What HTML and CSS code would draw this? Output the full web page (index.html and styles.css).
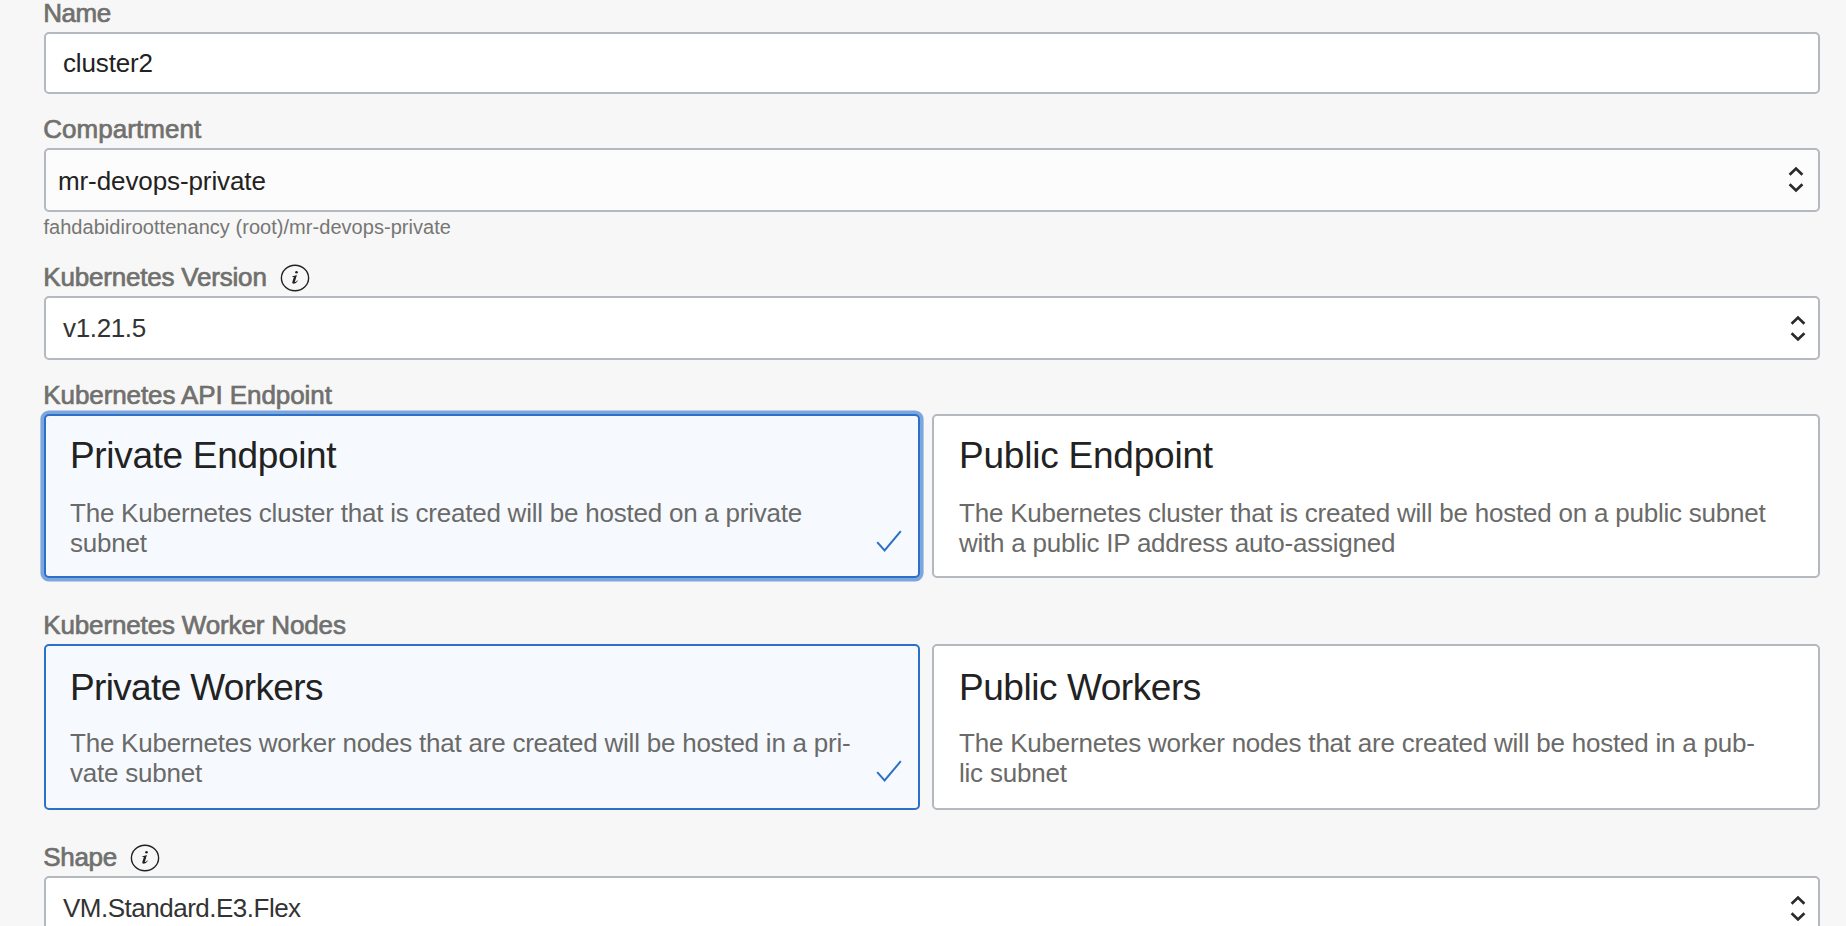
FILE: index.html
```html
<!DOCTYPE html>
<html lang="en">
<head>
<meta charset="utf-8">
<title>Create cluster</title>
<link rel="stylesheet" href="styles.css">
</head>
<body>
<svg class="symbols" width="0" height="0" aria-hidden="true">
  <symbol id="chevrons" viewBox="0 0 16 27"><path d="M1.6 8.8 8 2.6l6.4 6.2M1.6 18.2 8 24.4l6.4-6.2"/></symbol>
  <symbol id="check" viewBox="0 0 26 22"><path d="M1.2 12.2 8.6 20.4 24.8 1.2"/></symbol>
  <symbol id="info" viewBox="0 0 30 28">
    <ellipse cx="15" cy="14" rx="13.6" ry="12.8"/>
    <path class="info-stem" d="M12.2 12.4 16.9 11 14.8 18Q16.3 17.9 17.2 16.4L17.9 16.8Q16.2 19.8 13.6 19.8 11.8 19.8 12.3 18L13.9 12.9 12.2 13.1Z"/>
    <circle class="info-dot" cx="16.5" cy="8.2" r="1.3"/>
  </symbol>
</svg>
<form class="form">
  <div class="field">
    <label class="label label-name">Name</label>
    <div class="box box-input"><span class="value">cluster2</span></div>
  </div>
  <div class="field field-compartment">
    <label class="label label-compartment">Compartment</label>
    <div class="box box-compartment"><span class="value">mr-devops-private</span><svg class="chevrons"><use href="#chevrons"/></svg></div>
    <div class="hint">fahdabidiroottenancy (root)/mr-devops-private</div>
  </div>
  <div class="field">
    <label class="label label-version">Kubernetes Version<svg class="info"><use href="#info"/></svg></label>
    <div class="box"><span class="value value-version">v1.21.5</span><svg class="chevrons"><use href="#chevrons"/></svg></div>
  </div>
  <div class="field field-cards">
    <label class="label label-endpoint">Kubernetes API Endpoint</label>
    <div class="cards cards-endpoint">
      <div class="card selected focused">
        <div class="title">Private Endpoint</div>
        <div class="desc">The Kubernetes cluster that is created will be hosted on a private<br>subnet</div>
        <svg class="check"><use href="#check"/></svg>
      </div>
      <div class="card">
        <div class="title">Public Endpoint</div>
        <div class="desc">The Kubernetes cluster that is created will be hosted on a public subnet<br>with a public IP address auto-assigned</div>
      </div>
    </div>
  </div>
  <div class="field field-cards">
    <label class="label">Kubernetes Worker Nodes</label>
    <div class="cards cards-workers">
      <div class="card selected">
        <div class="title">Private Workers</div>
        <div class="desc">The Kubernetes worker nodes that are created will be hosted in a pri-<br>vate subnet</div>
        <svg class="check"><use href="#check"/></svg>
      </div>
      <div class="card">
        <div class="title">Public Workers</div>
        <div class="desc">The Kubernetes worker nodes that are created will be hosted in a pub-<br>lic subnet</div>
      </div>
    </div>
  </div>
  <div class="field">
    <label class="label label-shape">Shape<svg class="info"><use href="#info"/></svg></label>
    <div class="box"><span class="value value-shape">VM.Standard.E3.Flex</span><svg class="chevrons"><use href="#chevrons"/></svg></div>
  </div>
</form>
</body>
</html>
```
FILE: styles.css
```css
* { box-sizing: border-box; }
html { height: 100%; overflow: hidden; }
body {
  margin: 0;
  height: 100%;
  overflow: hidden;
  background: #f7f7f7;
  font-family: "Liberation Sans", Arial, sans-serif;
  font-size: 26px;
  color: #222;
}
.symbols { position: absolute; }
.form { padding: 0 26px 0 44px; }
.field { margin-bottom: 22px; }
.field-compartment { margin-bottom: 25px; }
.field-cards { margin-bottom: 34px; }
.label {
  display: flex;
  align-items: center;
  height: 26px;
  margin: 0 0 6px -0.7px;
  line-height: 26px;
  color: #70706e;
  letter-spacing: -0.15px;
  -webkit-text-stroke: 0.7px #70706e;
}
.label-name { letter-spacing: -0.5px; }
.label-compartment { letter-spacing: 0.03px; }
.label-version { letter-spacing: -0.2px; }
.label-endpoint { letter-spacing: -0.09px; }
.label-shape { letter-spacing: -0.35px; }
.info {
  width: 30px;
  height: 28px;
  margin: 2px 0 0 13px;
  fill: none;
  stroke: #222;
  stroke-width: 1.4px;
  -webkit-text-stroke: 0;
}
.info-stem, .info-dot { fill: #222; stroke: none; }
.box {
  display: flex;
  align-items: center;
  justify-content: space-between;
  height: 64px;
  padding: 0 12px 0 17px;
  border: 2px solid #b4b9bf;
  border-radius: 5px;
  background: #fff;
}
.box-input { height: 62px; }
.box-compartment { padding: 0 14px 0 12px; background: #fcfcfc; }
.box-compartment .value { padding-top: 2px; letter-spacing: -0.1px; }
.value { line-height: 30px; letter-spacing: -0.15px; }
.value-version { letter-spacing: -0.35px; color: #333; }
.value-shape { letter-spacing: -0.5px; color: #333; }
.chevrons {
  width: 16px;
  height: 27px;
  fill: none;
  stroke: #2a2a2a;
  stroke-width: 2.7px;
}
.box-compartment .chevrons { margin-bottom: 2px; }
.hint {
  margin: 3px 0 0 -0.6px;
  font-size: 20px;
  line-height: 24px;
  letter-spacing: 0.04px;
  color: #767674;
}
.cards { display: grid; grid-template-columns: 876px 888px; gap: 12px; }
.card {
  position: relative;
  padding: 20px 25px 0;
  border: 2px solid #b4b9bf;
  border-radius: 5px;
  background: #fff;
}
.cards-endpoint .card { height: 164px; }
.cards-workers .card { height: 166px; padding-top: 22px; }
.cards .selected { padding-left: 24px; border-color: #2c70c8; background: #f6faff; }
.focused { box-shadow: 0 0 0 3.6px #7ea6de; }
.title {
  margin-bottom: 22px;
  font-size: 37px;
  line-height: 40px;
  letter-spacing: -0.22px;
}
.selected .title { letter-spacing: -0.33px; }
.cards-workers .title { margin-bottom: 20px; letter-spacing: -0.45px; }
.cards-workers .selected .title { letter-spacing: -0.65px; }
.desc {
  line-height: 30px;
  letter-spacing: -0.22px;
  white-space: nowrap;
  color: #6a6a68;
}
.selected .desc { letter-spacing: -0.23px; }
.check {
  position: absolute;
  right: 16px;
  bottom: 24px;
  width: 26px;
  height: 22px;
  fill: none;
  stroke: #2c70c8;
  stroke-width: 2px;
}
.cards-workers .check { bottom: 26px; }
```
